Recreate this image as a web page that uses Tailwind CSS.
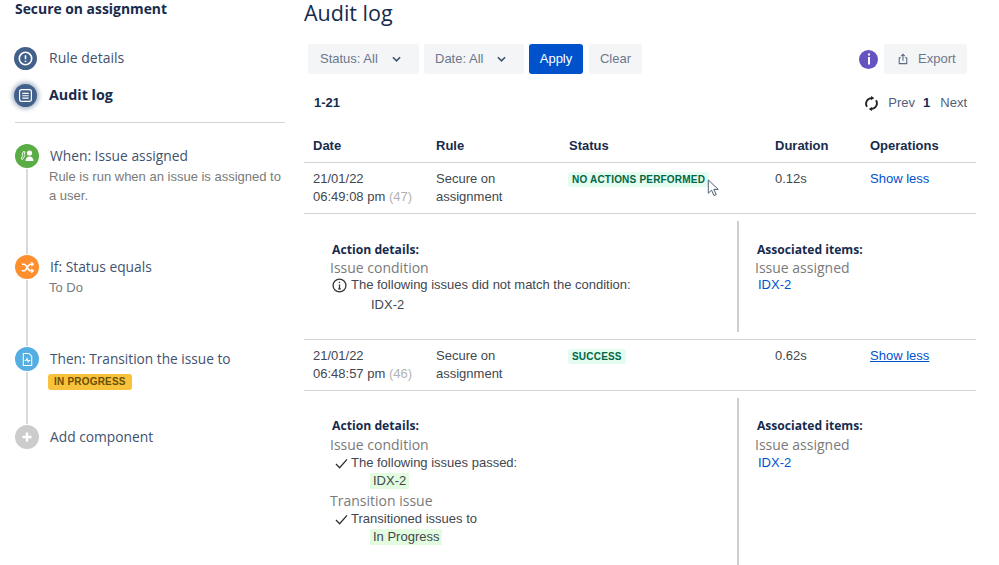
<!DOCTYPE html>
<html lang="en">

<head>
  <meta charset="UTF-8" />
  <meta name="viewport" content="width=device-width, initial-scale=1.0" />
  <title>Audit log</title>
  <script src="https://cdn.jsdelivr.net/npm/@tailwindcss/browser@4"></script>
</head>

<body class="bg-white text-[#42474f] font-['Liberation_Sans',sans-serif] text-[13px]">
  <div class="relative flex w-[999px] h-[565px] overflow-hidden">

    <!-- Sidebar -->
    <aside class="w-[304px] shrink-0 pl-[15px] pr-[19px] font-['Open_Sans',sans-serif]">
      <h2 class="h-[17px] leading-[17px] text-[13.9px] font-bold text-[#172b4d]">Secure on assignment</h2>

      <div class="mt-[29px] -ml-[1px] flex items-center h-[24px] gap-[12px]">
        <span class="w-[23px] h-[23px] rounded-full bg-[#42618a] flex items-center justify-center">
          <svg viewBox="0 0 14 14" class="w-[15px] h-[15px]" fill="none" stroke="white" stroke-width="1.5"><circle cx="7" cy="7" r="5.8"/><path d="M7 4v3.6M7 9.2v1"/></svg>
        </span>
        <span class="pb-[2px] text-[14px] text-[#42526e]">Rule details</span>
      </div>
      <div class="mt-[13px] -ml-[1px] flex items-center h-[24px] gap-[12px]">
        <span class="w-[23px] h-[23px] rounded-full bg-[#42618a] flex items-center justify-center shadow-[0_0_4px_2px_rgba(66,97,138,0.45)]">
          <svg viewBox="0 0 14 14" class="w-[15px] h-[15px]" fill="none" stroke="white" stroke-width="1.1"><rect x="1.5" y="1.5" width="11" height="11" rx="2"/><path d="M4 5h6M4 7.2h6M4 9.4h6"/></svg>
        </span>
        <span class="text-[14.3px] font-bold text-[#172b4d]">Audit log</span>
      </div>
      <div class="mt-[15px] h-px bg-[#d4d4d4]"></div>

      <!-- Rule steps -->
      <div class="relative mt-[21px]">
        <div class="absolute left-[11px] top-[10px] w-[2px] h-[270px] bg-[#d9d9d9]"></div>

        <div class="relative flex gap-[11px] h-[111px]">
          <span class="w-[24px] h-[24px] rounded-full bg-[#5aac44] flex items-center justify-center shrink-0 ring-1 ring-white">
            <svg viewBox="0 0 16 16" class="w-[16px] h-[16px]" fill="white"><circle cx="10.5" cy="5" r="2.6"/><path d="M6.5 13c0-3 1.6-4.6 4-4.6s4 1.600 4 4.600z"/><path d="M4.500 3.500l1.500.4-.8 2.600.8 1-2.500 4-1.300-.6 1.300-3.400-.3-1.300z" fill="none" stroke="white" stroke-width=".9"/></svg>
          </span>
          <div class="pt-[2px]">
            <div class="text-[13.8px] leading-[20px] text-[#42526e]">When: Issue assigned</div>
            <div class="mt-[1px] -ml-[1px] text-[13px] leading-[19px] text-[#7a7a7a] font-['Liberation_Sans',sans-serif] w-[240px]">Rule is run when an issue is assigned to a user.</div>
          </div>
        </div>

        <div class="relative flex gap-[11px] h-[92px]">
          <span class="w-[24px] h-[24px] rounded-full bg-[#ff8f2e] flex items-center justify-center shrink-0 ring-1 ring-white">
            <svg viewBox="0 0 16 16" class="w-[15px] h-[15px]" fill="none" stroke="white" stroke-width="1.700"><path d="M2 4.500h2.500c2.500 0 4 7 6.500 7h2M2 11.500h2.500c2.500 0 4-7 6.500-7h2"/><path d="M12 2.500l2.200 2-2.200 2M12 9.500l2.200 2-2.200 2" stroke-width="1.400"/></svg>
          </span>
          <div class="pt-[2px]">
            <div class="text-[13.8px] leading-[20px] text-[#42526e]">If: Status equals</div>
            <div class="mt-[1px] -ml-[1px] text-[13px] leading-[19px] text-[#7a7a7a] font-['Liberation_Sans',sans-serif]">To Do</div>
          </div>
        </div>

        <div class="relative flex gap-[11px] h-[78px]">
          <span class="w-[24px] h-[24px] rounded-full bg-[#55aee2] flex items-center justify-center shrink-0 ring-1 ring-white">
            <svg viewBox="0 0 16 16" class="w-[15px] h-[15px]" fill="none" stroke="white" stroke-width="1.100"><path d="M3.500 1.500h6l3 3v10h-9z"/><path d="M5 9h1.500l1-2 1.200 3.500 1-1.500H11"/></svg>
          </span>
          <div class="pt-[2px]">
            <div class="text-[13.7px] leading-[20px] text-[#42526e]">Then: Transition the issue to</div>
            <span class="mt-[5px] -ml-[2px] inline-block h-[16px] leading-[16px] px-[6px] rounded-[3px] bg-[#f9c23c] text-[10px] font-bold tracking-[0.2px] text-[#6b4e00] font-['Liberation_Sans',sans-serif]">IN PROGRESS</span>
          </div>
        </div>

        <div class="relative flex items-center gap-[11px] h-[24px]">
          <span class="w-[24px] h-[24px] rounded-full bg-[#cccccc] flex items-center justify-center shrink-0 ring-1 ring-white">
            <svg viewBox="0 0 10 10" class="w-[10px] h-[10px]" fill="none" stroke="white" stroke-width="2.400"><path d="M5 .5v9M.5 5h9"/></svg>
          </span>
          <span class="text-[13.8px] text-[#42526e]">Add component</span>
        </div>
      </div>
    </aside>

    <!-- Main -->
    <main class="w-[672px] shrink-0">
      <h1 class="h-[26px] leading-[26px] text-[21.5px] text-[#172b4d] font-['Open_Sans',sans-serif]">Audit log</h1>

      <!-- Filters -->
      <div class="mt-[18px] flex items-center h-[30px] pl-[4px]">
        <button class="w-[111px] h-[30px] rounded-[3px] bg-[#f4f5f7] text-[#6b778c] flex items-center pl-[12px]">Status: All
          <svg viewBox="0 0 10 6" class="ml-[14px] w-[9px] h-[6px]" fill="none" stroke="#42526e" stroke-width="1.800"><path d="M1 1l4 4 4-4"/></svg>
        </button>
        <button class="ml-[5px] w-[100px] h-[30px] rounded-[3px] bg-[#f4f5f7] text-[#6b778c] flex items-center pl-[11px]">Date: All
          <svg viewBox="0 0 10 6" class="ml-[14px] w-[9px] h-[6px]" fill="none" stroke="#42526e" stroke-width="1.800"><path d="M1 1l4 4 4-4"/></svg>
        </button>
        <button class="ml-[5px] w-[54px] h-[30px] rounded-[3px] bg-[#0052cc] text-white">Apply</button>
        <button class="ml-[6px] w-[53px] h-[30px] rounded-[3px] bg-[#f4f5f7] text-[#6b778c]">Clear</button>
        <span class="ml-auto w-[19px] h-[19px] rounded-full bg-[#6554c0] text-white flex items-center justify-center">
          <svg viewBox="0 0 8 12" class="w-[8px] h-[12px]" fill="white"><rect x="3" y="0.500" width="2" height="2"/><rect x="3" y="4" width="2" height="7.500"/></svg>
        </span>
        <button class="ml-[6px] mr-[9px] w-[83px] h-[30px] rounded-[3px] bg-[#f4f5f7] text-[#6b778c] flex items-center pl-[14px] gap-[10px]">
          <svg viewBox="0 0 12 14" class="w-[10px] h-[12px]" fill="none" stroke="#5e6c84" stroke-width="1.300"><path d="M3.500 5.500H1.500v7h9v-7h-2M6 9V1.500M3.800 3.500L6 1.300l2.200 2.200"/></svg>
          Export
        </button>
      </div>

      <!-- Pagination -->
      <div class="mt-[21px] flex items-center h-[16px] pl-[10px] pr-[9px]">
        <span class="font-bold text-[#172b4d]">1-21</span>
        <svg viewBox="0 0 16 16" class="ml-auto w-[15px] h-[15px]" fill="none" stroke="#222" stroke-width="1.900"><path d="M3.200 11.500A6 6 0 0 1 8 2.200M12.800 4.500A6 6 0 0 1 8 13.800"/><path d="M7.500 0l3.500 2.200L7.500 4.400zM8.500 11.600L5 13.800 8.500 16z" fill="#222" stroke="none"/></svg>
        <span class="ml-[9px] text-[#505f79]">Prev</span>
        <span class="ml-[8px] font-bold text-[#172b4d]">1</span>
        <span class="ml-[10px] text-[#505f79]">Next</span>
      </div>

      <!-- Table head -->
      <div class="mt-[18px] h-[34px] grid grid-cols-[123px_133px_206px_95px_1fr] pl-[9px] pt-[9px] leading-[16px] font-bold text-[#172b4d] border-b border-[#d4d4d4]">
        <div>Date</div>
        <div>Rule</div>
        <div>Status</div>
        <div>Duration</div>
        <div>Operations</div>
      </div>

      <!-- Row 47 -->
      <div class="h-[51px] grid grid-cols-[123px_133px_206px_95px_1fr] pl-[9px] pt-[7px] leading-[18px] border-b border-[#d4d4d4]">
        <div>21/01/22<br />06:49:08 pm <span class="text-[#b3b3b3]">(47)</span></div>
        <div>Secure on<br />assignment</div>
        <div><span class="inline-block h-[15px] leading-[15px] -ml-[1px] mt-[2px] align-top px-[4px] rounded-[3px] bg-[#e3fcef] text-[#006644] text-[10px] font-bold tracking-[0.2px] whitespace-nowrap">NO ACTIONS PERFORMED</span></div>
        <div>0.12s</div>
        <div class="text-[#0052cc]">Show less</div>
      </div>

      <!-- Details 47 -->
      <div class="h-[126px] flex border-b border-[#d4d4d4] pt-[7px]">
        <div class="w-[435px] h-[111px] border-r-2 border-[#cfcfcf] pt-[20px] pl-[26px]">
          <div class="h-[17px] leading-[17px] pl-[2px] font-['Open_Sans',sans-serif] text-[12.2px] font-bold text-[#172b4d]">Action details:</div>
          <div class="h-[19px] leading-[19px] text-[14px] text-[#7a7a7a] font-['Open_Sans',sans-serif]">Issue condition</div>
          <div class="flex items-center h-[16px] pl-[2px] gap-[4px]">
            <svg viewBox="0 0 14 14" class="w-[15px] h-[15px]" fill="none" stroke="#333" stroke-width="1.200"><circle cx="7" cy="7" r="6"/><path d="M7 6v4.200M5.800 10.200h2.400M7 3.500v1.200"/></svg>
            The following issues did not match the condition:
          </div>
          <div class="mt-[2px] pl-[41px] h-[19px] leading-[19px]">IDX-2</div>
        </div>
        <div class="pt-[20px] pl-[16px]">
          <div class="h-[17px] leading-[17px] pl-[2px] font-['Open_Sans',sans-serif] text-[12.1px] font-bold text-[#172b4d]">Associated items:</div>
          <div class="h-[19px] leading-[19px] text-[14px] text-[#7a7a7a] font-['Open_Sans',sans-serif]">Issue assigned</div>
          <div class="h-[16px] leading-[16px] pl-[3px] text-[#0052cc]">IDX-2</div>
        </div>
      </div>

      <!-- Row 46 -->
      <div class="h-[51px] grid grid-cols-[123px_133px_206px_95px_1fr] pl-[9px] pt-[7px] leading-[18px] border-b border-[#d4d4d4]">
        <div>21/01/22<br />06:48:57 pm <span class="text-[#b3b3b3]">(46)</span></div>
        <div>Secure on<br />assignment</div>
        <div><span class="inline-block h-[15px] leading-[15px] -ml-[1px] mt-[2px] align-top px-[4px] rounded-[3px] bg-[#e3fcef] text-[#006644] text-[10px] font-bold tracking-[0.2px]">SUCCESS</span></div>
        <div>0.62s</div>
        <div class="text-[#0052cc] underline">Show less</div>
      </div>

      <!-- Details 46 -->
      <div class="flex pt-[7px]">
        <div class="w-[435px] h-[170px] border-r-2 border-[#cfcfcf] pt-[19px] pl-[26px]">
          <div class="h-[17px] leading-[17px] pl-[2px] font-['Open_Sans',sans-serif] text-[12.2px] font-bold text-[#172b4d]">Action details:</div>
          <div class="mt-[1px] h-[20px] leading-[20px] text-[14px] text-[#7a7a7a] font-['Open_Sans',sans-serif]">Issue condition</div>
          <div class="flex items-center h-[16px] pl-[5px] gap-[3px]">
            <svg viewBox="0 0 14 12" class="w-[13px] h-[11px]" fill="none" stroke="#333" stroke-width="1.500"><path d="M1 6.500l4 4L13 1.500"/></svg>
            The following issues passed:
          </div>
          <div class="mt-[2px] ml-[40px] w-fit px-[3px] h-[16px] leading-[16px] bg-[#e3fcdf]">IDX-2</div>
          <div class="mt-[2px] h-[20px] leading-[20px] text-[14px] text-[#7a7a7a] font-['Open_Sans',sans-serif]">Transition issue</div>
          <div class="flex items-center h-[16px] pl-[5px] gap-[3px]">
            <svg viewBox="0 0 14 12" class="w-[13px] h-[11px]" fill="none" stroke="#333" stroke-width="1.500"><path d="M1 6.500l4 4L13 1.500"/></svg>
            Transitioned issues to
          </div>
          <div class="mt-[2px] ml-[40px] w-fit px-[3px] h-[16px] leading-[16px] bg-[#e3fcdf]">In Progress</div>
        </div>
        <div class="pt-[19px] pl-[16px]">
          <div class="h-[17px] leading-[17px] pl-[2px] font-['Open_Sans',sans-serif] text-[12.1px] font-bold text-[#172b4d]">Associated items:</div>
          <div class="mt-[1px] h-[20px] leading-[20px] text-[14px] text-[#7a7a7a] font-['Open_Sans',sans-serif]">Issue assigned</div>
          <div class="h-[16px] leading-[16px] pl-[3px] text-[#0052cc]">IDX-2</div>
        </div>
      </div>
    </main>

    <!-- Mouse cursor -->
    <svg viewBox="0 0 13 19" class="absolute left-[707px] top-[179px] w-[13px] h-[18px]" fill="white" stroke="#44546f" stroke-width="1"><path d="M1 1v14l3.500-3.200 2.500 5.700 2.400-1-2.500-5.500h4.600z"/></svg>
  </div>
</body>

</html>
